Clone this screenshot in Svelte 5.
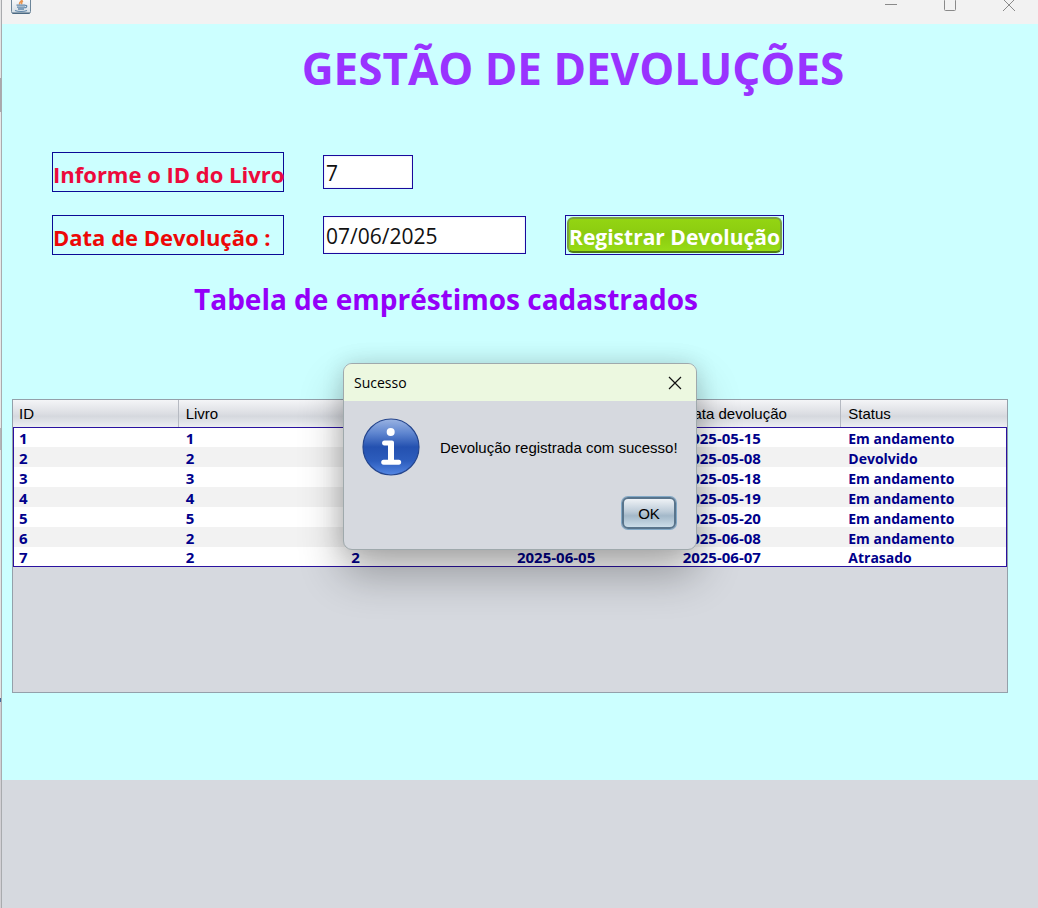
<script>
  let bookId = $state('7');
  let returnDate = $state('07/06/2025');

  const columns = ['ID', 'Livro', '', '', 'Data devolução', 'Status'];
  const rows = [
    ['1', '1', '', '', '2025-05-15', 'Em andamento'],
    ['2', '2', '', '', '2025-05-08', 'Devolvido'],
    ['3', '3', '', '', '2025-05-18', 'Em andamento'],
    ['4', '4', '', '', '2025-05-19', 'Em andamento'],
    ['5', '5', '', '', '2025-05-20', 'Em andamento'],
    ['6', '2', '', '', '2025-06-08', 'Em andamento'],
    ['7', '2', '2', '2025-06-05', '2025-06-07', 'Atrasado']
  ];
</script>

<div class="window">
  <div class="edge"></div>
  <div class="body">
    <header class="titlebar">
      <svg class="java" width="20" height="20" viewBox="0 0 20 20" aria-hidden="true">
        <defs>
          <linearGradient id="tile" x1="0" y1="0" x2="0" y2="1">
            <stop offset="0" stop-color="#ffffff" />
            <stop offset="1" stop-color="#d3dde5" />
          </linearGradient>
        </defs>
        <rect x="0.5" y="-3.5" width="19" height="17" rx="2" fill="url(#tile)" stroke="#6c8599" />
        <path d="M1.5 13.2h17" stroke="#48667f" stroke-width="1.4" />
        <path d="M10.8 -1c1.6 2-3.6 2.8-2 5.4M12 1.2c-2 1-1.6 1.7-1.2 3" fill="none" stroke="#e8944f" stroke-width="1.5" />
        <path d="M5.5 5.2h8.6M6 7.2h8M7 9h6" stroke="#6288aa" stroke-width="1.3" />
        <path d="M14 5.5c2.5-.6 2.4 2-.6 2.5M4 10.5c3 1.3 9 1.3 12 0" fill="none" stroke="#6288aa" stroke-width="1.2" />
      </svg>
      <div class="controls">
        <button aria-label="Minimizar"><svg width="14" height="14" viewBox="0 0 14 14"><path d="M1 6.5h12" /></svg></button>
        <button aria-label="Maximizar"><svg width="14" height="14" viewBox="0 0 14 14"><rect x="1.5" y="1.5" width="11" height="11" rx="1" /></svg></button>
        <button aria-label="Fechar"><svg width="14" height="14" viewBox="0 0 14 14"><path d="M1 1l12 12M13 1L1 13" /></svg></button>
      </div>
    </header>

    <main>
      <h1>GESTÃO DE DEVOLUÇÕES</h1>

      <form onsubmit={(e) => e.preventDefault()}>
        <label class="first" for="book">Informe o ID do Livro</label>
        <input id="book" class="short" type="text" bind:value={bookId} />
        <label class="second" for="date">Data de Devolução :</label>
        <input id="date" type="text" bind:value={returnDate} />
        <div class="outline"><button class="register">Registrar Devolução</button></div>
      </form>

      <h2>Tabela de empréstimos cadastrados</h2>

      <div class="scroll">
        <table>
          <thead>
            <tr>{#each columns as name}<th>{name}</th>{/each}</tr>
          </thead>
          <tbody>
            {#each rows as row}
              <tr>{#each row as cell}<td>{cell}</td>{/each}</tr>
            {/each}
          </tbody>
        </table>
      </div>

      <div class="dialog" role="dialog" aria-labelledby="dialog-title">
        <div class="dialog-head">
          <span id="dialog-title">Sucesso</span>
          <button class="close" aria-label="Fechar aviso">
            <svg width="14" height="14" viewBox="0 0 14 14"><path d="M1 1l12 12M13 1L1 13" /></svg>
          </button>
        </div>
        <div class="message">
          <svg width="58" height="58" viewBox="0 0 58 58" aria-hidden="true">
            <defs>
              <linearGradient id="ball" x1="0" y1="0" x2="0" y2="1">
                <stop offset="0" stop-color="#9ab3e2" />
                <stop offset="0.25" stop-color="#5f86d0" />
                <stop offset="0.5" stop-color="#2451b0" />
                <stop offset="0.75" stop-color="#2d5dbd" />
                <stop offset="1" stop-color="#5487e4" />
              </linearGradient>
            </defs>
            <circle cx="29" cy="29" r="28" fill="url(#ball)" stroke="#24458d" stroke-width="1.2" />
            <circle cx="28.7" cy="14" r="4" fill="#fff" />
            <path d="M22.5 22.5h7.5q2 0 2 2v17.200h4.800c3.200 0 3.200 5 0 5H21.600c-3.200 0-3.200-5 0-5h4.400V27.500h-3.500c-3.200 0-3.200-5 0-5z" fill="#fff" />
          </svg>
          <p>Devolução registrada com sucesso!</p>
        </div>
        <div class="actions"><button class="ok">OK</button></div>
      </div>
    </main>
  </div>
</div>

<style>
  :global(body) { margin: 0; }
  * { box-sizing: border-box; }
  button { font: inherit; padding: 0; border: 0; background: none; }

  .window {
    display: flex;
    min-height: 100vh;
    background: #d6d9df;
    font-family: "Liberation Sans", Arial, sans-serif;
    font-size: 15px;
    color: #000;
  }
  .edge {
    width: 2px;
    border-right: 1px solid #a9abae;
    background: linear-gradient(#e4e4e4 78px, #aaa8ac 78px 112px, #e8e8e8 112px 428px, #b5b5b8 428px 450px, #e4e4e4 450px 698px, #456a98 698px 702px, #d2d0d4 702px);
  }
  .body { flex: 1; min-width: 0; }

  .titlebar {
    display: flex;
    justify-content: space-between;
    height: 24px;
    padding: 0 22px 0 9px;
    background: #f2f2f2;
    overflow: hidden;
  }
  .controls { display: flex; gap: 45px; height: 14px; margin-top: -2px; }
  .controls button { display: flex; width: 14px; height: 14px; }
  .controls svg { fill: none; stroke: #8a8a8a; stroke-width: 1; }

  main {
    position: relative;
    height: 756px;
    padding: 14px 30px 0 10px;
    background: #ccffff;
  }
  h1, h2, label, input, .register, td {
    font-family: "Open Sans", "Noto Sans", sans-serif;
  }
  h1 {
    margin: 0;
    padding-left: 126px;
    font-size: 44px;
    line-height: 60px;
    text-align: center;
    color: #9933ff;
    white-space: nowrap;
  }
  form {
    display: grid;
    grid-template-columns: 232px 203px 219px;
    grid-template-rows: 40px 40px;
    align-items: center;
    gap: 23px 39px;
    margin: 54px 0 0 40px;
  }
  label {
    height: 40px;
    border: 1px solid #0a0a96;
    font-size: 22px;
    font-weight: 700;
    line-height: 42px;
    white-space: nowrap;
  }
  .first { color: #ec0a3c; }
  .second { grid-column: 1; color: #ec0808; }
  input {
    width: 100%;
    height: 38px;
    padding: 2px 2px 0;
    border: 1px solid #1a0a9c;
    background: #fff;
    box-shadow: inset 0 0 2px #c4dcf4;
    font-size: 21px;
    color: #111;
  }
  .short { width: 90px; height: 34px; }
  .outline { height: 40px; padding: 1px; border: 1px solid #1a0a9c; }
  .register {
    display: flex;
    align-items: center;
    justify-content: center;
    width: 100%;
    height: 36px;
    padding-top: 3px;
    border: 2px solid #7ba23f;
    border-bottom-color: #4c7c12;
    border-radius: 6px;
    background: linear-gradient(#93d512, #8bcb10 50%, #97dc16);
    font-size: 21px;
    font-weight: 700;
    color: #fff;
    white-space: nowrap;
  }
  h2 {
    margin: 24px 0 0 182px;
    font-size: 28px;
    line-height: 40px;
    color: #9400f8;
    white-space: nowrap;
  }

  .scroll {
    height: 294px;
    margin-top: 80px;
    border: 1px solid #94a0aa;
    background: #d6d9df;
  }
  table {
    width: 100%;
    border-collapse: separate;
    border-spacing: 0;
    table-layout: fixed;
  }
  th {
    height: 27px;
    padding: 0 7px 1px;
    border-right: 1px solid #b6bac2;
    background: linear-gradient(#f4f5f7, #dcdee3 50%, #d5d8de 60%, #eceef1);
    font-weight: 400;
    text-align: left;
    white-space: nowrap;
  }
  th:first-child { padding-left: 6px; }
  th:last-child { border-right: 0; }
  td {
    height: 20px;
    padding: 2px 7px 0;
    background: #fff;
    font-size: 15px;
    font-weight: 700;
    line-height: 17px;
    color: #00008b;
    white-space: nowrap;
  }
  td:first-child { padding-left: 5px; }
  td:last-child { font-size: 14px; }
  tbody tr:nth-child(even) td { background: #f2f2f2; }
  tbody tr:first-child td { border-top: 1px solid #2a12a0; }
  tbody tr:last-child td { border-bottom: 1px solid #2a12a0; }
  tbody td:first-child { border-left: 1px solid #2a12a0; }
  tbody td:last-child { border-right: 1px solid #2a12a0; }

  .dialog {
    position: absolute;
    top: 339px;
    left: 50%;
    width: 354px;
    height: 187px;
    transform: translateX(-50%);
    border: 1px solid #9fa9ac;
    border-radius: 9px;
    background: #d6d9df;
    box-shadow: 0 24px 44px rgba(0, 0, 0, 0.3), 0 0 22px rgba(0, 0, 0, 0.14);
    overflow: hidden;
  }
  .dialog-head {
    display: flex;
    align-items: center;
    justify-content: space-between;
    height: 37px;
    padding: 0 14px 0 10px;
    background: #ecf8e0;
    font-family: "Open Sans", "Noto Sans", sans-serif;
    font-size: 14px;
  }
  .close { display: flex; }
  .close svg { fill: none; stroke: #111; stroke-width: 1.2; }
  .message {
    display: flex;
    align-items: center;
    gap: 20px;
    padding: 17px 18px 0;
  }
  .message svg { flex: none; }
  p { margin: 0; white-space: nowrap; }
  .actions { display: flex; justify-content: flex-end; padding: 21px 20px 0; }
  .ok {
    width: 54px;
    height: 32px;
    border: 2px solid #58748c;
    border-radius: 6px;
    background: linear-gradient(#eef2f6, #bccbd8 45%, #a3b8c9 60%, #cbdde9);
    box-shadow: 0 0 0 1px #82a8c6;
  }
</style>
